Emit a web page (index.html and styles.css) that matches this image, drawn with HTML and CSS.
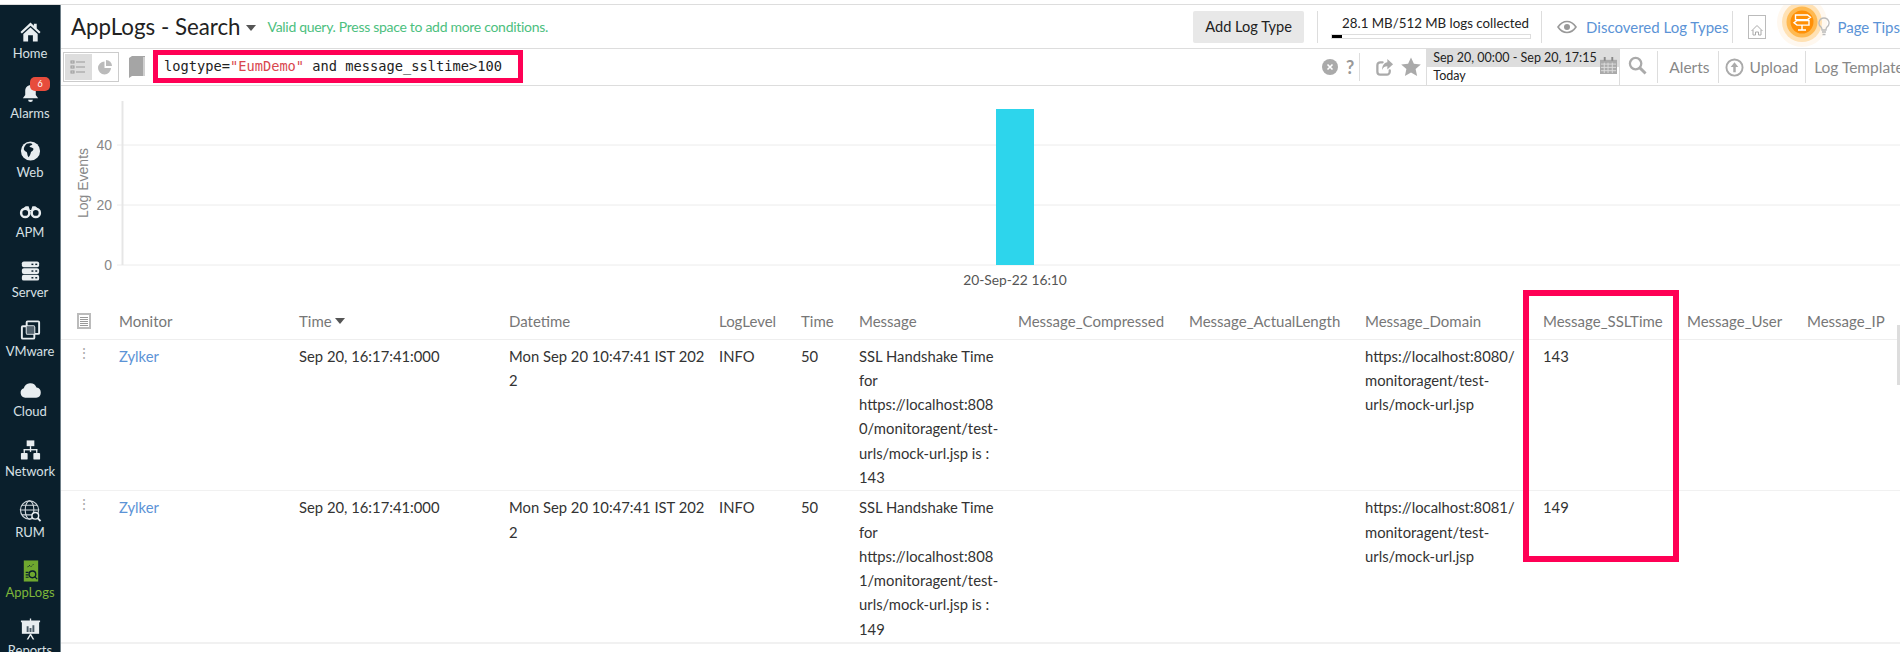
FILE: index.html
```html
<!DOCTYPE html>
<html lang="en">
<head>
<meta charset="utf-8">
<title>AppLogs - Search</title>
<link rel="stylesheet" href="styles.css">
</head>
<body>
<div class="app">
  <nav class="side">
    <a class="item"><svg viewBox="0 0 24 24"><path fill="#e8edf0" d="M12 2 1.500 12l1.500 1.600L12 5.400l9 8.200 1.500-1.600L18.500 8.300V3.500h-3v2.100z"/><path fill="#e8edf0" d="M4.500 14 12 7.200 19.500 14v8h-5v-6.500h-5V22h-5z"/></svg><span>Home</span></a>
    <a class="item"><svg viewBox="0 0 24 24"><path fill="#e8edf0" d="M12 5c-3.600 0-5.500 2.700-5.500 6v4L4 18.500h16L17.500 15v-4c0-3.300-1.900-6-5.500-6z"/><path fill="#e8edf0" d="M9.500 20a2.500 2.500 0 0 0 5 0z"/></svg><b class="badge">6</b><span>Alarms</span></a>
    <a class="item"><svg viewBox="0 0 24 24"><circle cx="12" cy="12" r="10" fill="#e8edf0"/><path fill="#0a1f2c" d="M8 4.500c2.500-1 5-.8 6 .5-.6 1.500-2.800 1-3 2.500 1.500 1.200 3 .5 4 2 .5 1.500-1 3-2.500 3.500-.5 2-1 4-2.500 5.500-1.500-1.500-1-4-2-5.500-1.500-.5-2.800-1.500-3-3 .3-2.200 1.300-4 3-5.500z"/></svg><span>Web</span></a>
    <a class="item"><svg viewBox="0 0 24 24"><g fill="none" stroke="#e8edf0" stroke-width="2.600"><circle cx="6.500" cy="14" r="4.300"/><circle cx="17.500" cy="14" r="4.300"/></g><path fill="#e8edf0" d="M3.500 10 7 7h3l1 3v2h2v-2l1-3h3l3.500 3-3 1h-11z"/></svg><span>APM</span></a>
    <a class="item"><svg viewBox="0 0 24 24"><g fill="#e8edf0"><rect x="3" y="2" width="18" height="6" rx="2"/><rect x="3" y="9" width="18" height="6" rx="2"/><rect x="3" y="16" width="18" height="6" rx="2"/></g><g fill="#0a1f2c"><rect x="13" y="4.300" width="2" height="1.500"/><rect x="17" y="4.300" width="2" height="1.500"/><rect x="13" y="11.300" width="2" height="1.500"/><rect x="17" y="11.300" width="2" height="1.500"/><rect x="13" y="18.300" width="2" height="1.500"/><rect x="17" y="18.300" width="2" height="1.500"/></g></svg><span>Server</span></a>
    <a class="item"><svg viewBox="0 0 24 24"><g fill="none" stroke="#e8edf0" stroke-width="2"><rect x="8" y="3" width="13" height="13" rx="1"/><rect x="3" y="8" width="13" height="13" rx="1"/></g><rect x="8" y="8" width="8" height="8" fill="#54636e"/></svg><span>VMware</span></a>
    <a class="item"><svg viewBox="0 0 24 24"><path fill="#e8edf0" d="M6.500 20A5 5 0 0 1 5 10.300 7 7 0 0 1 18.300 9.500 5.300 5.300 0 0 1 18 20z"/></svg><span>Cloud</span></a>
    <a class="item"><svg viewBox="0 0 24 24"><g fill="#e8edf0"><rect x="8" y="2" width="8" height="6"/><rect x="11.300" y="8" width="1.400" height="6"/><rect x="5" y="11" width="14" height="1.400"/><rect x="2" y="15" width="7" height="7" rx="1"/><rect x="15" y="15" width="7" height="7" rx="1"/><rect x="4.800" y="11" width="1.400" height="4"/><rect x="17.800" y="11" width="1.400" height="4"/></g></svg><span>Network</span></a>
    <a class="item item-rum"><svg viewBox="0 0 24 24"><g fill="none" stroke="#cfd6da" stroke-width="1.200"><circle cx="11" cy="11" r="9.500"/><ellipse cx="11" cy="11" rx="4.500" ry="9.500"/><path d="M1.500 11h19M3 6h16M3 16h16"/></g><circle cx="17" cy="17" r="3.500" fill="#0a1f2c" stroke="#e8edf0" stroke-width="1.500"/><path d="m19.500 19.500 3 3" stroke="#e8edf0" stroke-width="2"/></svg><span>RUM</span></a>
    <a class="item active"><svg viewBox="0 0 24 24"><rect x="5" y="1" width="15" height="22" fill="#6fa82f"/><circle cx="14" cy="15.500" r="3.500" fill="none" stroke="#0a1f2c" stroke-width="1.400"/><path d="m16.500 18 2.500 2.500M7 13.500h3M7 16h3M7 18.500h3" stroke="#0a1f2c" stroke-width="1.200"/><path d="M9 8l1.500-2 2 1.500L15 5" fill="none" stroke="#0a1f2c" stroke-width="1" stroke-dasharray="1.500 1"/></svg><span>AppLogs</span></a>
    <a class="item item-reports"><svg viewBox="0 0 24 24"><rect x="3" y="4" width="18" height="13" fill="#e8edf0"/><path d="M2 3h20v2H2zM11.300 1h1.400v2h-1.400zM8 23l3.500-6h1L16 23h-1.700L12 19l-2.300 4z" fill="#e8edf0"/><path d="M8 9h2v6H8zM11 11h2v4h-2zM14 8h2v7h-2z" fill="#4a5b66"/></svg><span>Reports</span></a>
  </nav>

  <main class="main">
    <header class="head">
      <h1 class="title">AppLogs - Search</h1>
      <i class="caret caret-title"></i>
      <span class="valid">Valid query. Press space to add more conditions.</span>
      <div class="head-right">
        <button class="add">Add Log Type</button>
        <i class="rule rule-a"></i>
        <div class="usage">
          <span class="usage-text">28.1 MB/512 MB logs collected</span>
          <div class="meter"><div class="meter-fill" style="width:5%"></div></div>
        </div>
        <i class="rule rule-b"></i>
        <svg class="eye" viewBox="0 0 20 14"><path fill="none" stroke="#999" stroke-width="1.600" d="M1 7c2.500-3.700 5.500-5.500 9-5.500S16.500 3.300 19 7c-2.500 3.700-5.500 5.500-9 5.500S3.500 10.700 1 7z"/><circle cx="10" cy="7" r="3" fill="#999"/></svg>
        <a class="link discovered">Discovered Log Types</a>
        <i class="rule rule-c"></i>
        <svg class="homebox" viewBox="0 0 18 24"><rect x=".5" y=".5" width="17" height="23" fill="#fff" stroke="#bbb"/><path fill="none" stroke="#aaa" d="M3.500 16 9 10.500l5.500 5.500M5 15v5h2.500v-3h3v3H13v-5"/></svg>
        <svg class="beacon" viewBox="0 0 50 46"><circle cx="25" cy="19" r="25" fill="#fff8ef"/><circle cx="25" cy="19" r="20" fill="#ffe1b3"/><circle cx="25" cy="19" r="15.500" fill="#ffb950"/><circle cx="25" cy="19" r="11.500" fill="#ff8f05"/><path fill="none" stroke="#fff" stroke-width="1.400" d="M18.500 12h12l3 2.300-3 2.300h-12zM32 17.500H20l-3 2.300 3 2.300h12zM25 22.500v4M21 27h8"/></svg>
        <svg class="bulb" viewBox="0 0 12 20"><path fill="none" stroke="#bbb" stroke-width="1.300" d="M6 1a5 5 0 0 0-3 9c.7.7 1 1.500 1 3h4c0-1.500.3-2.300 1-3a5 5 0 0 0-3-9z"/><path stroke="#bbb" stroke-width="1.600" d="M4 15h4M4.500 17.500h3"/></svg>
        <a class="link tips">Page Tips</a>
      </div>
    </header>

    <section class="bar">
      <div class="toggle">
        <span class="toggle-on"><svg viewBox="0 0 16 16"><g fill="none" stroke="#999"><rect x="1" y="2" width="3" height="2"/><rect x="1" y="7" width="3" height="2"/><rect x="1" y="12" width="3" height="2"/><path d="M6 3h9M6 8h9M6 13h9"/></g></svg></span>
        <span class="toggle-off"><svg viewBox="0 0 16 16"><path fill="#bbb" d="M7.500 2.500a6.500 6.500 0 1 0 6.500 6.500H7.500z"/><path fill="#bbb" d="M9 1v6h6a6 6 0 0 0-6-6z"/></svg></span>
      </div>
      <svg class="book" viewBox="0 0 18 24"><path fill="#a5a5a5" d="M1 3l3-2h13v20H4l-3 2z"/><path fill="#d0d0d0" d="M15 2h2v19h-2z"/></svg>
      <div class="query">logtype=<span class="str">"EumDemo"</span> and message_ssltime&gt;100</div>
      <div class="bar-right">
        <svg class="tool clear" viewBox="0 0 16 16"><circle cx="8" cy="8" r="8" fill="#aaa"/><path stroke="#fff" stroke-width="1.600" d="m5.500 5.500 5 5m0-5-5 5"/></svg>
        <span class="help">?</span>
        <i class="rule rule-d"></i>
        <svg class="tool share" viewBox="0 0 20 20"><path fill="none" stroke="#aaa" stroke-width="2.400" stroke-linecap="round" d="M15.500 13v1.500a3 3 0 0 1-3 3h-7a3 3 0 0 1-3-3v-7a3 3 0 0 1 3-3H8"/><path fill="#aaa" d="m13 1 6 5.500-6 5.500V8.800c-2.500 0-4.500 1-5.500 3.700 0-4.500 2-7.500 5.500-8z"/></svg>
        <svg class="tool star" viewBox="0 0 20 20"><path fill="#aaa" d="m10 .5 2.900 6.300 6.900.7-5.200 4.600 1.500 6.800L10 15.400 3.900 18.900l1.500-6.800L.2 7.500l6.900-.7z"/></svg>
        <div class="date">
          <div class="date-range">Sep 20, 00:00 - Sep 20, 17:15</div>
          <div class="date-label">Today</div>
          <svg class="cal" viewBox="0 0 18 18"><path fill="#aaa" d="M0 3h18v15H0z"/><path fill="#888" d="M4 0h2v4H4zM12 0h2v4h-2z"/><path stroke="#ddd" d="M1 7.500h16M1 11h16M1 14.500h16M4.500 6v11M8.500 6v11M13 6v11"/></svg>
        </div>
        <i class="rule rule-e"></i>
        <svg class="tool search" viewBox="0 0 20 20"><circle cx="8" cy="8" r="6" fill="none" stroke="#aaa" stroke-width="2.400"/><path stroke="#aaa" stroke-width="3" d="m12.500 12.500 6 6"/></svg>
        <i class="rule rule-f"></i>
        <span class="action alerts">Alerts</span>
        <i class="rule rule-g"></i>
        <svg class="tool upload" viewBox="0 0 20 20"><circle cx="10" cy="10" r="8.500" fill="none" stroke="#aaa" stroke-width="2"/><path fill="#aaa" d="M10 4.500 14 9.500h-2.700V15H8.700V9.500H6z"/></svg>
        <span class="action uploadtext">Upload</span>
        <i class="rule rule-h"></i>
        <span class="action template">Log Template</span>
      </div>
    </section>

    <svg class="chart" viewBox="0 0 1839 214">
      <path class="grid" d="M56 59h1783M56 119h1783M56 179h1783"/>
      <path class="axis" d="M61.500 15v164"/>
      <rect x="935" y="23" width="38" height="156" fill="#2dd5ec"/>
      <text class="tick" x="51" y="64" text-anchor="end">40</text>
      <text class="tick" x="51" y="124" text-anchor="end">20</text>
      <text class="tick" x="51" y="184" text-anchor="end">0</text>
      <text class="tick" transform="translate(27 97) rotate(-90)" text-anchor="middle">Log Events</text>
      <text class="xlabel" x="954" y="199" text-anchor="middle">20-Sep-22 16:10</text>
    </svg>

    <table class="logs">
      <colgroup>
        <col class="c58"><col class="c180"><col class="c210"><col class="c210"><col class="c82"><col class="c58"><col class="c159"><col class="c171"><col class="c176"><col class="c178"><col class="c144"><col class="c120"><col class="c93">
      </colgroup>
      <thead>
        <tr>
          <th class="th-icon"><svg viewBox="0 0 14 16"><rect width="14" height="16" fill="#bbb"/><rect x="2" y="2" width="10" height="12" fill="#fff"/><path stroke="#999" d="M3 4.500h8M3 6.500h8M3 8.500h8M3 10.500h8M3 12.500h8"/></svg></th>
          <th>Monitor</th>
          <th>Time<i class="caret caret-sort"></i></th>
          <th>Datetime</th>
          <th>LogLevel</th>
          <th>Time</th>
          <th>Message</th>
          <th>Message_Compressed</th>
          <th>Message_ActualLength</th>
          <th>Message_Domain</th>
          <th>Message_SSLTime</th>
          <th>Message_User</th>
          <th>Message_IP</th>
        </tr>
      </thead>
      <tbody>
        <tr>
          <td class="dots">⋮</td>
          <td><a class="link">Zylker</a></td>
          <td>Sep 20, 16:17:41:000</td>
          <td>Mon Sep 20 10:47:41 IST 202<br>2</td>
          <td>INFO</td>
          <td>50</td>
          <td>SSL Handshake Time<br>for<br>https://localhost:808<br>0/monitoragent/test-<br>urls/mock-url.jsp is :<br>143</td>
          <td></td>
          <td></td>
          <td>https://localhost:8080/<br>monitoragent/test-<br>urls/mock-url.jsp</td>
          <td>143</td>
          <td></td>
          <td></td>
        </tr>
        <tr>
          <td class="dots">⋮</td>
          <td><a class="link">Zylker</a></td>
          <td>Sep 20, 16:17:41:000</td>
          <td>Mon Sep 20 10:47:41 IST 202<br>2</td>
          <td>INFO</td>
          <td>50</td>
          <td>SSL Handshake Time<br>for<br>https://localhost:808<br>1/monitoragent/test-<br>urls/mock-url.jsp is :<br>149</td>
          <td></td>
          <td></td>
          <td>https://localhost:8081/<br>monitoragent/test-<br>urls/mock-url.jsp</td>
          <td>149</td>
          <td></td>
          <td></td>
        </tr>
      </tbody>
    </table>
    <div class="callout"></div>
    <div class="thumb"></div>
  </main>
</div>
</body>
</html>
```

FILE: styles.css
```css
* { box-sizing: border-box; }
html, body { margin: 0; padding: 0; height: 652px; overflow: hidden; background: #fff; }
body { font-family: Lato, "Open Sans", sans-serif; font-size: 14px; color: #333; padding-top: 4px; }
.app { display: flex; height: 648px; border-top: 1px solid #ddd; overflow: hidden; }

/* sidebar */
.side { flex: 0 0 61px; background: #0a1f2c; border-right: 1px solid #6f7f88; padding-top: 15px; overflow: hidden; }
.item { position: relative; display: flex; flex-direction: column; align-items: center; height: 59.7px; color: #d8e0e5; font-size: 13px; line-height: 14px; white-space: nowrap; }
.item svg { width: 23px; height: 24px; display: block; }
.item span { margin-top: 2px; }
.item.active { color: #7db63a; }
.item-rum { margin-top: 1px; margin-bottom: 1px; }
.item-reports { margin-top: -2px; }
.badge { position: absolute; left: 30px; top: -3px; width: 20px; height: 14px; border-radius: 5px; background: #e74c3c; color: #fff; font-size: 9px; line-height: 14px; font-weight: 400; text-align: center; }

/* main */
.main { position: relative; flex: 1 1 auto; min-width: 0; }
.link { color: #5b93d6; }
.rule { display: block; flex: 0 0 auto; width: 1px; background: #ddd; }
.caret { display: inline-block; width: 0; height: 0; border-left: 5px solid transparent; border-right: 5px solid transparent; border-top: 6px solid #555; }

/* header row */
.head { display: flex; align-items: center; height: 44px; border-bottom: 1px solid #ddd; }
.title { margin: 0 0 0 10px; font-size: 22.3px; font-weight: 400; color: #222; line-height: 30px; white-space: nowrap; }
.caret-title { margin: 3px 0 0 5px; }
.valid { margin-left: 12px; color: #4cc07e; font-size: 14px; letter-spacing: -0.3px; white-space: nowrap; }
.head-right { display: flex; align-items: center; flex: 0 0 705px; margin-left: auto; white-space: nowrap; overflow: visible; }
.add { width: 111px; height: 32px; padding: 0; border: 0; border-radius: 2px; background: #e8e8e8; color: #222; font: 14.6px Lato, sans-serif; }
.rule-a { height: 32px; margin-left: 13px; }
.usage { width: 200px; margin-left: 13px; }
.usage-text { display: block; margin-left: 11px; font-size: 13.3px; line-height: 17px; color: #222; }
.meter { height: 5px; margin-top: 2px; border: 1px solid #ddd; }
.meter-fill { height: 3px; background: #000; }
.rule-b { height: 32px; margin-left: 10px; }
.eye { width: 20px; height: 14px; margin-left: 15px; }
.discovered { margin-left: 9px; font-size: 15px; }
.rule-c { height: 32px; margin-left: 4px; }
.homebox { width: 18px; height: 24px; margin-left: 15px; }
.beacon { width: 50px; height: 46px; margin: -2px 0 0 11px; align-self: flex-start; position: relative; z-index: 2; flex: 0 0 auto; }
.bulb { width: 12px; height: 20px; margin-left: -9px; position: relative; z-index: 3; flex: 0 0 auto; }
.tips { margin-left: 7px; font-size: 15px; }

/* query row */
.bar { display: flex; align-items: center; height: 37px; border-bottom: 1px solid #ddd; }
.toggle { display: flex; width: 56px; height: 30px; margin-left: 2px; border: 1px solid #ccc; flex: 0 0 auto; }
.toggle-on, .toggle-off { display: flex; align-items: center; justify-content: center; width: 27px; }
.toggle-on { background: #ddd; margin: 1px 0 1px 1px; }
.toggle svg { width: 16px; height: 16px; }
.book { width: 18px; height: 24px; margin-left: 9px; flex: 0 0 auto; }
.query { width: 370px; height: 33px; margin: -1px 0 0 7px; border: 5px solid #ff0055; padding-left: 6px; font: 13.7px/23px "DejaVu Sans Mono", monospace; color: #222; white-space: nowrap; flex: 0 0 auto; }
.str { color: #d9464e; }
.bar-right { display: flex; align-items: center; flex: 0 0 578px; height: 36px; margin-left: auto; overflow: hidden; color: #888; white-space: nowrap; }
.tool { flex: 0 0 auto; }
.clear { width: 16px; height: 16px; }
.help { margin-left: 8px; width: 11px; font-size: 18px; font-weight: 700; color: #999; }
.rule-d { height: 28px; margin-left: 5px; }
.share { width: 19px; height: 19px; margin-left: 15px; }
.star { width: 20px; height: 20px; margin-left: 7px; }
.date { position: relative; flex: 0 0 193px; height: 36px; margin-left: 5px; border-left: 1px solid #ddd; color: #222; font-size: 12.5px; line-height: 18px; }
.date-range { padding-left: 6px; background: #ddd; }
.date-label { padding-left: 6px; }
.cal { position: absolute; right: 2px; top: 8px; width: 17px; height: 17px; }
.rule-e { height: 36px; }
.search { width: 19px; height: 19px; margin: -4px 0 0 8px; }
.rule-f { height: 32px; margin-left: 10px; }
.action { color: #888; font-size: 15.500px; }
.alerts { margin-left: 11px; }
.rule-g { height: 32px; margin-left: 8px; }
.upload { width: 19px; height: 19px; margin-left: 6px; }
.uploadtext { margin-left: 6px; }
.rule-h { height: 32px; margin-left: 7px; }
.template { margin-left: 8px; }

/* chart */
.chart { display: block; width: 1839px; height: 214px; }
.grid { stroke: #ececec; stroke-width: 1; fill: none; }
.axis { stroke: #e6e6e6; stroke-width: 2; fill: none; }
.tick { font: 14px "Liberation Sans", sans-serif; fill: #888; }
.xlabel { font: 13.800px Lato, sans-serif; fill: #555; }

/* table */
.logs { width: 1839px; table-layout: fixed; border-collapse: collapse; }
.c58 { width: 58px; } .c180 { width: 180px; } .c210 { width: 210px; } .c82 { width: 82px; }
.c159 { width: 159px; } .c171 { width: 171px; } .c176 { width: 176px; } .c178 { width: 178px; }
.c144 { width: 144px; } .c120 { width: 120px; } .c93 { width: 93px; }
.logs th { height: 39px; padding: 3px 0 0; border-bottom: 1px solid #eee; color: #777; font-weight: 400; font-size: 15px; text-align: left; white-space: nowrap; }
.th-icon svg { display: block; width: 14px; height: 16px; margin-left: 16px; }
.caret-sort { margin: 0 0 3px 3px; }
.logs td { height: 151px; padding: 4px 0 1px; border-bottom: 1px solid #f1f1f1; font-size: 14.800px; line-height: 24.300px; vertical-align: top; white-space: nowrap; color: #333; }
.logs tbody tr:last-child td { border-bottom: 2px solid #f1f1f1; }
.logs td.dots { padding-left: 16px; color: #aaa; font-size: 14px; line-height: 18px; }

/* overlays */
.callout { position: absolute; left: 1462px; top: 285px; width: 156px; height: 272px; border: 6px solid #ff0055; }
.thumb { position: absolute; right: 0; top: 320px; width: 3px; height: 60px; background: #ddd; }
```
